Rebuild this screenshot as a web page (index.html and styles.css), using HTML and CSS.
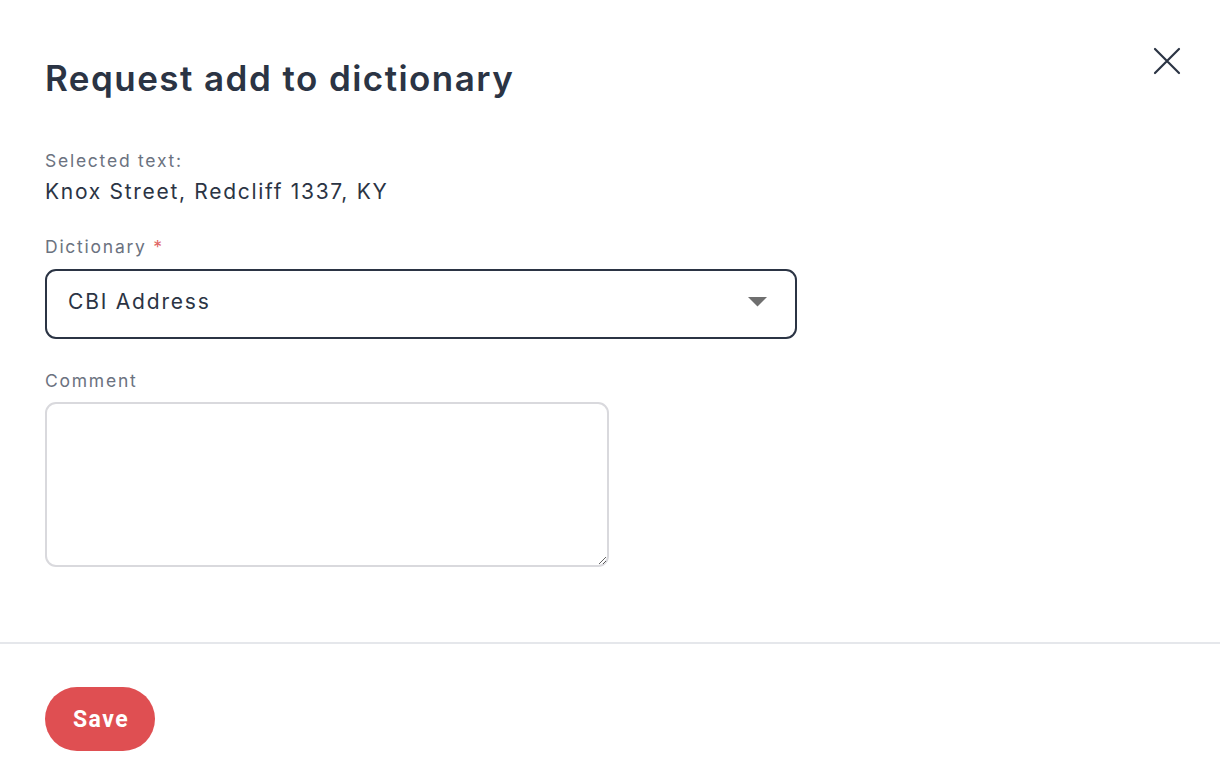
FILE: index.html
```html
<!DOCTYPE html>
<html lang="en">
<head>
<meta charset="utf-8">
<title>Request add to dictionary</title>
<link rel="stylesheet" href="styles.css">
</head>
<body>
<div class="dialog">
  <div class="dialog-body">
    <div class="header">
      <h1 class="title">Request add to dictionary</h1>
      <button class="close" aria-label="Close">
        <svg width="28" height="28" viewBox="0 0 28 28"><path d="M2 2L26 26M26 2L2 26" stroke="#2b3444" stroke-width="2.2" stroke-linecap="round" fill="none"/></svg>
      </button>
    </div>
    <div class="selected">
      <div class="label">Selected text:</div>
      <div class="value">Knox Street, Redcliff 1337, KY</div>
    </div>
    <div class="field">
      <div class="label">Dictionary <span class="req">*</span></div>
      <div class="select">
        <span class="select-value">CBI Address</span>
        <svg class="caret" width="19" height="10" viewBox="0 0 19 10"><path d="M0 0H19L9.5 9.5Z" fill="#6f6f6f"/></svg>
      </div>
    </div>
    <div class="field">
      <div class="label">Comment</div>
      <textarea class="comment"></textarea>
    </div>
  </div>
  <div class="footer">
    <button class="save">Save</button>
  </div>
</div>
</body>
</html>
```
FILE: styles.css
```css
* { box-sizing: border-box; }
html, body { margin: 0; padding: 0; background: #fff; }
body { font-family: Inter, "Noto Sans", sans-serif; color: #2b3444; }
.dialog { width: 1220px; }
.dialog-body { padding: 46px 39px 0 45px; height: 644px; border-bottom: 2px solid #e5e7eb; }
.header { display: flex; justify-content: space-between; align-items: flex-start; }
.title { margin: 11px 0 0; font-size: 35px; font-weight: 600; line-height: 42px; color: #2b3444; letter-spacing: 1.45px; }
.close { border: 0; background: none; padding: 0; margin: 1px 0 0; width: 28px; height: 28px; cursor: pointer; }
.close svg { display: block; }
.selected { margin-top: 50px; }
.label { font-size: 17.5px; line-height: 24px; color: #6b7280; letter-spacing: 1.75px; }
.req { color: #e06666; }
.value { font-size: 21px; line-height: 30px; color: #2b3444; margin-top: 4px; letter-spacing: 1.7px; }
.field { margin-top: 28px; }
.field + .field { margin-top: 30px; }
.select { margin-top: 10px; width: 752px; height: 70px; border: 2px solid #2b3444; border-radius: 11px; display: flex; align-items: center; justify-content: space-between; padding: 0 28px 6px 21px; }
.select-value { font-size: 21px; color: #2b3444; letter-spacing: 1.8px; }
.caret { display: block; margin-top: 2px; }
.comment { display: block; margin-top: 9px; width: 564px; height: 165px; border: 2px solid #d9d9dd; border-radius: 11px; resize: both; font-family: inherit; font-size: 18px; outline: none; }
.footer { padding: 43px 45px; }
.save { height: 64px; width: 110px; border: 0; border-radius: 32px; background: #df4f52; color: #fff; font-family: Roboto, "Liberation Sans", sans-serif; font-weight: 700; font-size: 23px; letter-spacing: 1.5px; cursor: pointer; padding: 0 0 0 2px; }
```
